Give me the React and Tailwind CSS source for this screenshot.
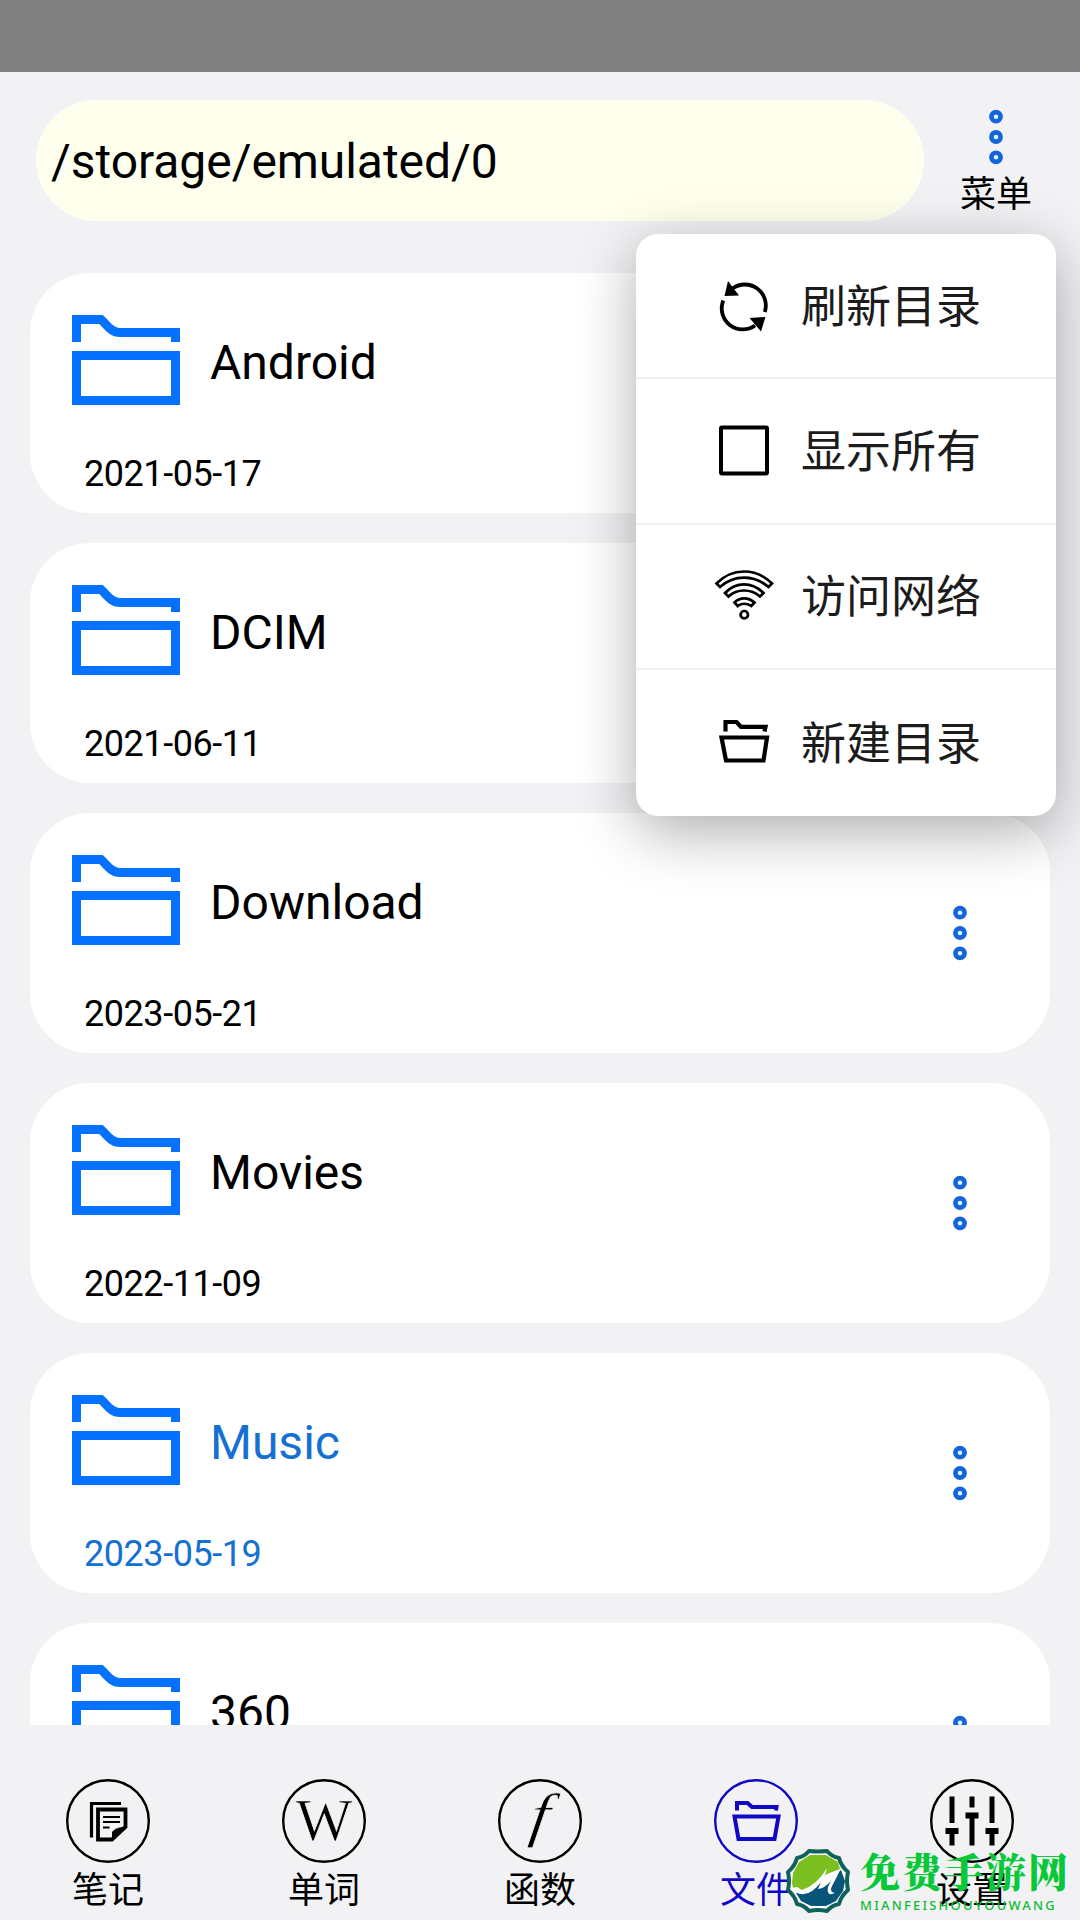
import clsx from 'clsx';

const FOLDERS = [
  { name: 'Android', date: '2021-05-17' },
  { name: 'DCIM', date: '2021-06-11' },
  { name: 'Download', date: '2023-05-21' },
  { name: 'Movies', date: '2022-11-09' },
  { name: 'Music', date: '2023-05-19', active: true },
  { name: '360', date: '2023-05-19' },
];

const FolderIcon = () => (
  <svg width="108" height="90" viewBox="0 0 108 90" fill="none" stroke="#0571ff" strokeWidth="9">
    <path d="M4.5 27V4.5H29C35 10 39 17.5 48 17.5H103.5V27" />
    <path d="M4.5 40.5H103.5V85.5H4.5Z" />
  </svg>
);

const Dots = () => (
  <svg width="20" height="56" viewBox="0 0 20 56" fill="#d9f7ff" stroke="#1464dc" strokeWidth="4.6">
    <circle cx="10" cy="7.7" r="4.6" />
    <circle cx="10" cy="28" r="4.6" />
    <circle cx="10" cy="48.3" r="4.6" />
  </svg>
);

const RefreshIcon = () => (
  <svg width="60" height="60" viewBox="0 0 60 60" fill="none" stroke="#000" strokeWidth="3.8">
    <path d="M18.5 12.5A21 21 0 0 1 50.8 36" />
    <path d="M9.3 24.5A21 21 0 0 0 41 49.5" />
    <path d="M14 5L25 19.5L10.5 20Z" fill="#000" stroke="none" />
    <path d="M51.5 41L47 55.500L35.5 42Z" fill="#000" stroke="none" />
  </svg>
);

const BoxIcon = () => (
  <svg width="60" height="60" viewBox="0 0 60 60" fill="none" stroke="#000" strokeWidth="4">
    <rect x="7" y="6.5" width="46" height="46" rx="1" />
  </svg>
);

const WifiIcon = () => (
  <svg width="60" height="60" viewBox="0 0 60 60" fill="none" stroke="#000" strokeWidth="2.7">
    <path d="M2.5 17.5C18 1.5 42 1.500 58 17.5L54.5 21C40 8.5 20 8.5 6 21Z" />
    <path d="M11 27C22 15.5 38 15.5 49.5 27L46 30.5C37 22.5 23 22.5 14.5 30.5Z" />
    <path d="M20.5 36.5C26 31 34 31 40.5 36.5L37.3 40C33 37 27 37 23.7 40Z" />
    <circle cx="30.3" cy="48.7" r="3.7" />
  </svg>
);

const OpenFolderIcon = () => (
  <svg width="60" height="60" viewBox="0 0 60 60" fill="none" stroke="currentColor" strokeWidth="4.2">
    <path d="M11.5 18.5V9H22.5L27 13.8H51.500L50.5 18.5" />
    <path d="M7.5 24.5H53L49.5 47.5H12Z" />
  </svg>
);

const MENU = [
  { label: '刷新目录', Icon: RefreshIcon },
  { label: '显示所有', Icon: BoxIcon },
  { label: '访问网络', Icon: WifiIcon },
  { label: '新建目录', Icon: OpenFolderIcon },
];

const NoteGlyph = () => (
  <g fill="none" stroke="#000">
    <path d="M25.5 58.5V24.5H55" strokeWidth="3.2" />
    <path d="M32 30.5H59.5V48L46 60.5H32Z" strokeWidth="3.8" />
    <path d="M60.5 47L46 61.5V53Q48 49 60.5 47Z" fill="#000" stroke="none" />
    <path d="M37 38H54M37 43H54M37 48.500H43.5" strokeWidth="1.8" />
  </g>
);

const FileGlyph = () => (
  <g fill="none" stroke="currentColor" strokeWidth="4">
    <path d="M23 31.500V24H33.5L38 28H62.5L62 31.5" />
    <path d="M20.500 37.5H64.5L60.5 60H24.5Z" />
  </g>
);

const SlidersGlyph = () => (
  <g fill="none" stroke="#000" strokeWidth="5">
    <path d="M22 17.5V44M22 52V66.5M42 17.5V28.5M42 36V66.5M62 17.5V44M62 52V66.5" />
    <path d="M15.5 52H28.5M35.5 36.5H48.5M55.5 52H68.5" strokeWidth="6" />
  </g>
);

// a thin rim in the page colour slims the serif letters down
const LetterGlyph = ({ children, ...props }) => (
  <text fontSize="60" textAnchor="middle" fill="#000" stroke="#f2f2f5" strokeWidth="0.7" className="font-['Liberation_Serif',serif]" {...props}>
    {children}
  </text>
);

const TABS = [
  { label: '笔记', glyph: <NoteGlyph /> },
  { label: '单词', glyph: <LetterGlyph x="42" y="61">W</LetterGlyph> },
  {
    label: '函数',
    glyph: <LetterGlyph x="0" y="0" fontStyle="italic" transform="translate(39.5 56) skewX(-8) scale(1.15 1)">f</LetterGlyph>,
  },
  { label: '文件', glyph: <FileGlyph />, active: true },
  { label: '设置', glyph: <SlidersGlyph /> },
];

const FolderCard = ({ folder }) => (
  <div
    className={clsx(
      'h-[240px] shrink-0 rounded-[60px] bg-white flex items-center justify-between pl-[42px] pr-20',
      folder.active ? 'text-[#1470d2]' : 'text-black'
    )}
  >
    <div className="h-full pt-[42px]">
      <div className="flex items-center h-[90px] gap-[30px]">
        <FolderIcon />
        <span className="text-[48px] leading-none pt-[6px]">{folder.name}</span>
      </div>
      <p className="mt-[49px] ml-3 text-[36px] leading-[40px] tracking-[-0.45px]">{folder.date}</p>
    </div>
    <Dots />
  </div>
);

const PopupMenu = () => (
  <div className="absolute left-[636px] top-[234px] w-[420px] h-[582px] rounded-[22px] bg-white shadow-[0_16px_60px_rgba(0,0,0,0.32)] flex flex-col">
    {MENU.map(({ label, Icon }, i) => (
      <div
        key={label}
        className={clsx('h-[145.3px] flex items-center pl-[78px] gap-[27px] text-black', i < MENU.length - 1 && 'border-b-2 border-[#f0f0f0]')}
      >
        <Icon />
        <span className="text-[45px] leading-none text-[#1c1c1c] pt-[3px]">{label}</span>
      </div>
    ))}
  </div>
);

const Watermark = () => (
  <div className="absolute left-[784px] top-[1848px] flex items-start">
    <svg width="68" height="66" viewBox="0 0 68 66">
      <path
        d="M25 3Q34 4 43 3Q48 9 55 10Q57 18 64 24Q62 33 64 42Q57 48 55 56Q48 57 43 63Q34 61 25 63Q20 57 13 56Q11 48 4 42Q6 33 4 24Q11 18 13 10Q20 9 25 3Z"
        fill="#fff"
        stroke="#0f625b"
        strokeWidth="4"
        strokeLinejoin="round"
      />
      <path d="M26 7H42L49 11L54 14L56 21L43 26L30 37L20 43L9 40L8 35L9 25L15 14Z" fill="#7cbf20" />
      <path d="M12 45Q25 45 33 35L42 24L36 39L57 22L61 33L59 43L52 53L42 58H27L17 53Z" fill="#075578" />
      <path d="M8 41Q12 37 16 41L18 42Q33 37 43 20Q41 29 38 35Q49 30 57 20Q53 29 48 38Q45 44 51 45Q42 49 44 39L47 33Q41 40 34 41L37 34Q29 45 20 46Q13 47 8 41Z" fill="#fff" />
    </svg>
    <div className="pl-2 pt-[2px] text-[#08c83a]">
      <p className="text-[40px] leading-[40px] font-black tracking-[2px] whitespace-nowrap font-['Noto_Serif_CJK_SC','Noto_Sans_CJK_SC',serif]">免费手游网</p>
      <p className="mt-[9px] text-[13px] leading-none tracking-[2.2px] text-[#10bc35] font-['Noto_Sans',sans-serif] font-medium">MIANFEISHOUYOUWANG</p>
    </div>
  </div>
);

export default function App() {
  return (
    <div className="relative w-[1080px] h-[1920px] overflow-hidden bg-[#f2f2f5] text-black flex flex-col font-['Roboto','Noto_Sans_CJK_SC',sans-serif]">
      <div className="h-[72px] shrink-0 bg-[#808080]" />

      <header className="h-[201px] shrink-0 flex items-start pl-9 pt-7">
        <div className="w-[888px] h-[121px] rounded-full bg-[#ffffee] flex items-center pl-[15px] pt-[3px] text-[48px] tracking-[-0.05px]">
          /storage/emulated/0
        </div>
        <div className="flex-1 pr-3 pt-[9px] flex flex-col items-center">
          <Dots />
          <span className="mt-1 text-[36px] leading-[52px]">菜单</span>
        </div>
      </header>

      <main className="h-[1452px] shrink-0 overflow-hidden flex flex-col gap-[30px] px-[30px]">
        {FOLDERS.map((folder) => (
          <FolderCard key={folder.name} folder={folder} />
        ))}
      </main>

      <nav className="flex-1 grid grid-cols-5 pt-[54px]">
        {TABS.map((tab) => (
          <div key={tab.label} className={clsx('flex flex-col items-center', tab.active ? 'text-[#1008c4]' : 'text-black')}>
            <svg width="84" height="84" viewBox="0 0 84 84">
              <circle cx="42" cy="42" r="40.8" fill="none" stroke="currentColor" strokeWidth="2.4" />
              {tab.glyph}
            </svg>
            <span className="mt-0.5 text-[36px] leading-[52px]">{tab.label}</span>
          </div>
        ))}
      </nav>

      <PopupMenu />
      <Watermark />
    </div>
  );
}
